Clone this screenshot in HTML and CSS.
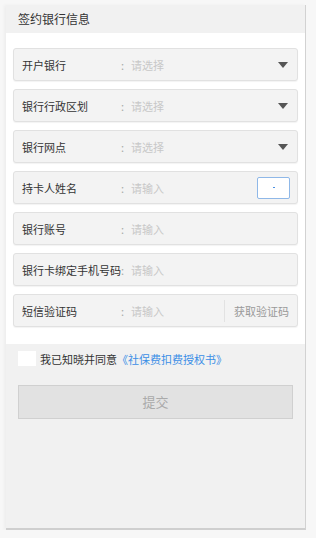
FILE: index.html
```html
<!DOCTYPE html>
<html lang="zh-CN">
<head>
    <meta charset="UTF-8">
    <title>签约银行信息</title>
    <link rel="stylesheet" href="styles.css">
</head>
<body>
    <div class="panel">
        <div class="panel-title">签约银行信息</div>

        <div class="form-box">
            <div class="field">
                <span class="label">开户银行</span>
                <span class="colon">:</span>
                <span class="value">请选择</span>
                <span class="arrow"></span>
            </div>
            <div class="field">
                <span class="label">银行行政区划</span>
                <span class="colon">:</span>
                <span class="value">请选择</span>
                <span class="arrow"></span>
            </div>
            <div class="field">
                <span class="label">银行网点</span>
                <span class="colon">:</span>
                <span class="value">请选择</span>
                <span class="arrow"></span>
            </div>
            <div class="field">
                <span class="label">持卡人姓名</span>
                <span class="colon">:</span>
                <span class="value">请输入</span>
                <span class="mini-input"><i></i></span>
            </div>
            <div class="field">
                <span class="label">银行账号</span>
                <span class="colon">:</span>
                <span class="value">请输入</span>
            </div>
            <div class="field">
                <span class="label">银行卡绑定手机号码</span>
                <span class="colon">:</span>
                <span class="value">请输入</span>
            </div>
            <div class="field">
                <span class="label">短信验证码</span>
                <span class="colon">:</span>
                <span class="value">请输入</span>
                <span class="get-code">获取验证码</span>
            </div>
        </div>

        <div class="agree">
            <span class="check"></span>
            <span>我已知晓并同意</span><a class="agree-link">《社保费扣费授权书》</a>
        </div>

        <div class="submit">提交</div>
    </div>
</body>
</html>
```

FILE: styles.css
```css
body {
    margin: 0;
    background: #f7f7f7;
    font-family: "Noto Sans CJK SC", "Microsoft YaHei", sans-serif;
    font-size: 11px;
    color: #333;
}

.panel {
    margin: 5px 10px 0 6px;
    height: 525px;
    box-sizing: border-box;
    background: #f1f1f1;
    border-right: 1px solid #d2d2d2;
    border-bottom: 2px solid #cfcfcf;
    box-shadow: -2px 0 3px rgba(0, 0, 0, 0.04);
}

.panel-title {
    height: 28px;
    line-height: 28px;
    padding-left: 12px;
    font-size: 12px;
    color: #333;
    background: #f1f1f1;
}

.form-box {
    background: #fff;
    padding: 15px 7px 17px 7px;
    display: flex;
    flex-direction: column;
    gap: 8px;
}

.field {
    height: 33px;
    box-sizing: border-box;
    display: flex;
    align-items: center;
    padding: 0 8px 0 8px;
    background: #f3f3f3;
    border: 1px solid #e1e1e1;
    border-radius: 3px;
    box-shadow: 0 1px 1px rgba(0, 0, 0, 0.05);
}

.label {
    min-width: 99px;
    white-space: nowrap;
}

.colon {
    width: 10px;
    color: #aaa;
}

.value {
    flex: 1;
    color: #c8c8c8;
}

.arrow {
    width: 0;
    height: 0;
    border-left: 5px solid transparent;
    border-right: 5px solid transparent;
    border-top: 6px solid #555;
    margin-right: 1px;
}

.mini-input {
    width: 33px;
    height: 22px;
    box-sizing: border-box;
    border: 1px solid #8fb8e8;
    border-radius: 2px;
    background: #fff;
    display: flex;
    align-items: center;
    justify-content: center;
    margin-right: -1px;
}

.mini-input i {
    width: 2px;
    height: 1px;
    background: #4a90e2;
}

.get-code {
    color: #999;
    border-left: 1px solid #e2e2e2;
    padding-left: 9px;
    line-height: 22px;
}

.agree {
    display: flex;
    align-items: center;
    padding: 7px 0 0 12px;
    height: 15px;
}

.check {
    width: 18px;
    height: 15px;
    background: #fff;
    margin-right: 4px;
}

.agree-link {
    color: #3a8ee6;
}

.submit {
    margin: 19px 12px 0 12px;
    height: 34px;
    box-sizing: border-box;
    line-height: 32px;
    text-align: center;
    font-size: 13px;
    color: #aaa;
    background: #e2e2e2;
    border: 1px solid #d0d0d0;
}
```
